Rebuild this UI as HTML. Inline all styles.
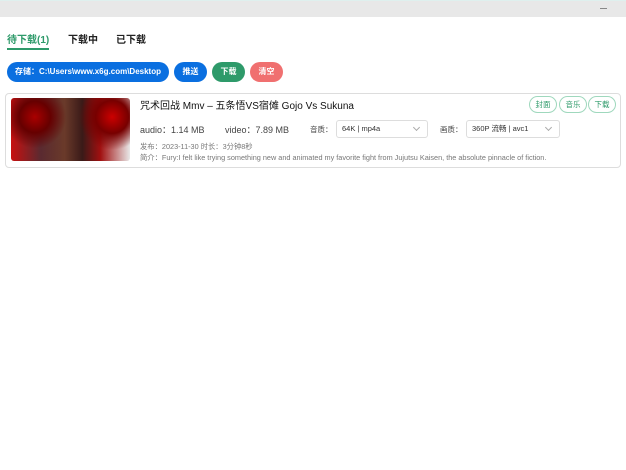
<!DOCTYPE html><html><head><meta charset="utf-8"><style>
*{margin:0;padding:0;box-sizing:border-box}
body{width:626px;height:470px;background:#fff;font-family:"Liberation Sans","Noto Sans CJK SC",sans-serif;position:relative;overflow:hidden;color:#222}
.a{position:absolute;white-space:nowrap}
.btn{position:absolute;top:62px;height:20px;border-radius:10px;color:#fff;font-size:8px;font-weight:bold;line-height:20px;text-align:center}
.tag{position:absolute;top:96px;height:17px;border:1px solid #9fd8bd;border-radius:9px;color:#2e9a6a;font-size:7.5px;line-height:15px;text-align:center;width:28px}
.sel{position:absolute;top:120px;height:18px;border:1px solid #ddd;border-radius:3px;font-size:7.5px;line-height:16px;padding-left:5px;color:#333}
.sel i{position:absolute;right:8px;top:4px;width:5px;height:5px;border-right:1px solid #aaa;border-bottom:1px solid #aaa;transform:rotate(45deg)}
</style></head><body>
<div class="a" style="left:0;top:0;width:626px;height:17px;background:#e8e8e8;border-top:1px solid #dff0ee"></div>
<div class="a" style="left:600px;top:8px;width:7px;height:1px;background:#888"></div>
<div class="a" style="left:7px;top:31px;font-size:10px;color:#2e9a6a;font-weight:bold">待下载(1)</div>
<div class="a" style="left:7px;top:48px;width:42px;height:2px;background:#2e9a6a"></div>
<div class="a" style="left:68px;top:31px;font-size:10px;font-weight:bold">下载中</div>
<div class="a" style="left:116px;top:31px;font-size:10px;font-weight:bold">已下载</div>
<div class="btn" style="left:7px;width:162px;background:#0a6fe0">存储：C:\Users\www.x6g.com\Desktop</div>
<div class="btn" style="left:174px;width:33px;background:#0a6fe0">推送</div>
<div class="btn" style="left:212px;width:33px;background:#2e9a6a">下载</div>
<div class="btn" style="left:250px;width:33px;background:#f07070">清空</div>
<div class="a" style="left:5px;top:93px;width:616px;height:75px;border:1px solid #ddd;border-radius:4px"></div>
<div class="a" style="left:11px;top:98px;width:119px;height:63px;border-radius:3px;background:radial-gradient(circle at 20% 30%,#a00 0,#600 15%,transparent 30%),radial-gradient(circle at 85% 30%,#c00 0,#700 15%,transparent 30%),linear-gradient(90deg,#c81010 0,#5a2a30 25%,#6a3a2a 45%,#3a1a18 60%,#a01010 75%,#e8e8e8 100%)"></div>
<div class="a" style="left:140px;top:97px;font-size:10px;color:#111">咒术回战 Mmv – 五条悟VS宿傩 Gojo Vs Sukuna</div>
<div class="tag" style="left:529px">封面</div>
<div class="tag" style="left:559px">音乐</div>
<div class="tag" style="left:588px">下载</div>
<div class="a" style="left:140px;top:123px;font-size:9px;color:#444">audio：1.14 MB</div>
<div class="a" style="left:225px;top:123px;font-size:9px;color:#444">video：7.89 MB</div>
<div class="a" style="left:310px;top:124px;font-size:7.5px;color:#444">音质：</div>
<div class="sel" style="left:336px;width:92px">64K | mp4a<i></i></div>
<div class="a" style="left:440px;top:124px;font-size:7.5px;color:#444">画质：</div>
<div class="sel" style="left:466px;width:94px">360P 流畅 | avc1<i></i></div>
<div class="a" style="left:140px;top:142px;font-size:7.3px;color:#777">发布：2023-11-30 时长：3分钟8秒</div>
<div class="a" style="left:140px;top:153px;font-size:7.3px;color:#777">简介：Fury:I felt like trying something new and animated my favorite fight from Jujutsu Kaisen, the absolute pinnacle of fiction.</div>
</body></html>
